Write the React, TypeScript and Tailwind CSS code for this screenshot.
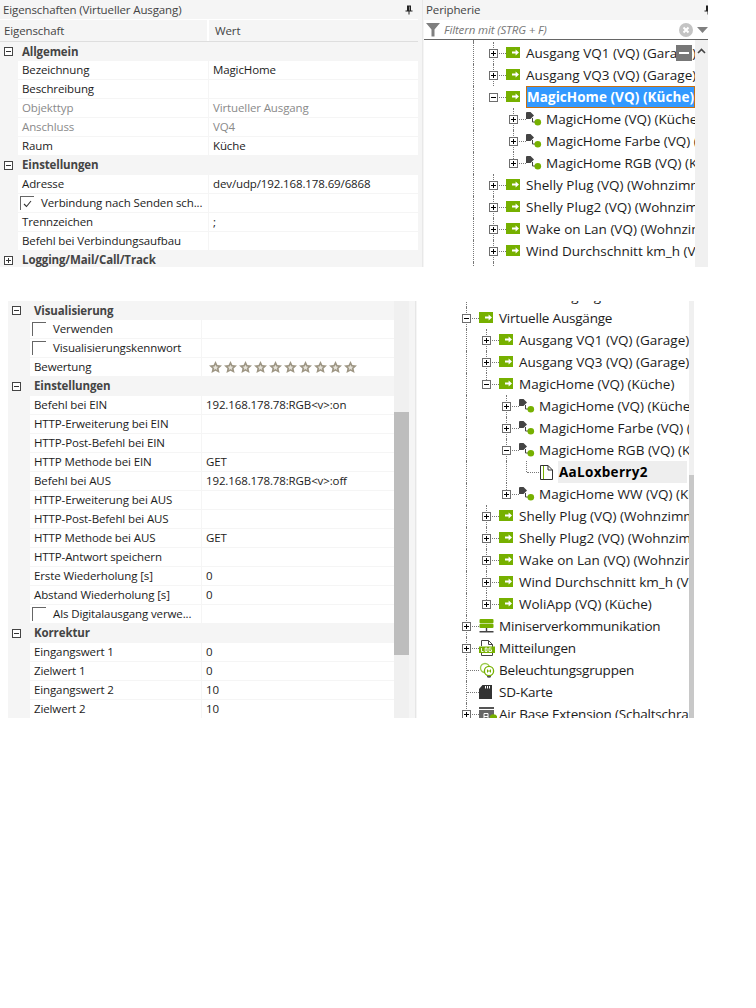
import React from "react";

const Font = "font-['Open_Sans','Noto_Sans',sans-serif]";

function Pin() {
  return (
    <svg width="8" height="10" viewBox="0 0 8 10" className="shrink-0">
      <path d="M2 0.5H6V5.5H7.5V6.5H4.5V9.5H3.5V6.5H0.5V5.5H2Z M4.5 1.5V5.5H5V1.5Z" fill="#222" fillRule="evenodd" />
    </svg>
  );
}

function Box({ open, dark }: { open: boolean; dark?: boolean }) {
  const c = dark ? "#333" : "#000";
  return (
    <svg width="9" height="9" viewBox="0 0 9 9" className="shrink-0">
      <rect x="0.5" y="0.5" width="8" height="8" fill="#fff" stroke={dark ? "#444" : "#6e6e6e"} />
      <path d={open ? "M2 4.5H7" : "M2 4.5H7M4.5 2V7"} stroke={c} />
    </svg>
  );
}

function Check({ on }: { on?: boolean }) {
  return (
    <div className="w-[14px] h-[14px] border-l border-t border-[#666] flex items-center justify-center shrink-0">
      {on && (
        <svg width="9" height="8" viewBox="0 0 9 8">
          <path d="M1 4L3.5 6.5L8 1" stroke="#333" fill="none" strokeWidth="1.1" />
        </svg>
      )}
    </div>
  );
}

function Star() {
  return (
    <svg width="13" height="12" viewBox="0 0 13 12" className="shrink-0">
      <path
        d="M6.5 0L8.4 4L13 4.6L9.6 7.6L10.6 12L6.5 9.8L2.4 12L3.4 7.6L0 4.6L4.6 4Z"
        fill="#9e9684"
      />
      <path d="M6.5 3.8L7.3 5.6L9.2 5.8L7.8 7.2L8.2 9L6.5 8.1L4.8 9L5.2 7.2L3.8 5.8L5.7 5.6Z" fill="#e6e3da" />
    </svg>
  );
}

type PropDef = {
  label?: string;
  value?: string;
  disabled?: boolean;
  check?: "on" | "off";
  stars?: boolean;
  group?: "open" | "closed";
};

function PropRows({ rows, left, col1, col2 }: { rows: PropDef[]; left: number; col1: string; col2: string }) {
  return (
    <>
      {rows.map((r, i) => {
        if (r.group) {
          return (
            <div key={i} className={`flex items-center shrink-0 ${i === 0 ? "h-[19px]" : "h-[20px]"}`}>
              <div className="flex items-center shrink-0" style={{ width: left }}>
                <span className="ml-[4px]">
                  <Box open={r.group === "open"} dark />
                </span>
              </div>
              <span className="pl-[4px] font-bold text-[#444]">{r.label}</span>
            </div>
          );
        }
        const next = rows[i + 1];
        const lastInGroup = !next || next.group;
        return (
          <div key={i} className={`flex shrink-0 gap-px ${lastInGroup ? "h-[18px]" : "h-[18px] mb-px"}`} style={{ paddingLeft: left }}>
            <div className={`${col1} bg-white flex items-center shrink-0 ${r.disabled ? "text-[#8a8a8a]" : "text-[#1c1c1c]"}`}>
              {r.check ? (
                <div className="flex items-center pl-[2px]">
                  <Check on={r.check === "on"} />
                  <span className="pl-[7px] whitespace-nowrap">{r.label}</span>
                </div>
              ) : (
                <span className="pl-[4px] whitespace-nowrap">{r.label}</span>
              )}
            </div>
            <div className={`${col2} bg-white flex items-center pl-[4px] ${r.disabled ? "text-[#8a8a8a]" : "text-[#1c1c1c]"}`}>
              {r.stars ? (
                <div className="flex gap-[2px] ml-[3px]">
                  {Array.from({ length: 10 }).map((_, k) => (
                    <Star key={k} />
                  ))}
                </div>
              ) : (
                <span className="whitespace-nowrap">{r.value}</span>
              )}
            </div>
          </div>
        );
      })}
    </>
  );
}

/* ---------- tree icons ---------- */
function GreenOut() {
  return (
    <svg width="14" height="11" viewBox="0 0 14 11" className="mb-[1px]">
      <rect width="14" height="11" fill="#76b000" />
      <path d="M6 4.4H9.6V2.6L13 5.5L9.6 8.4V6.6H6Z" fill="#fff" />
    </svg>
  );
}
function SubOut() {
  return (
    <svg width="16" height="14" viewBox="0 0 16 14">
      <path d="M0.5 0H4.5L8 3.5L4.5 7H0V0.5Z" fill="#444" />
      <path d="M6.5 6V10H9" stroke="#444" fill="none" />
      <circle cx="11.8" cy="10.3" r="3.3" fill="#76b000" />
    </svg>
  );
}
function DocIcon() {
  return (
    <svg width="13" height="15" viewBox="0 0 13 15" className="ml-[1px]">
      <path d="M0.5 0.5H8L12.5 5V14.5H0.5Z M8 0.5V5H12.5" fill="#fff" stroke="#333" />
      <path d="M3.5 1V14" stroke="#76b000" />
    </svg>
  );
}
function ServerIcon() {
  return (
    <svg width="15" height="14" viewBox="0 0 15 14">
      <rect x="0.5" y="0" width="14" height="4.2" rx="1" fill="#76b000" />
      <rect x="0.5" y="4.8" width="14" height="4.2" rx="1" fill="#76b000" />
      <path d="M7.5 9V12.5M0.5 12.8H14.5" stroke="#444" strokeWidth="1.4" />
    </svg>
  );
}
function LogIcon() {
  return (
    <svg width="16" height="16" viewBox="0 0 16 16">
      <path d="M2.5 6V0.5H9.5L13.5 4.5V15.5H2.5V13" fill="#fff" stroke="#444" />
      <path d="M9.5 0.5V4.5H13.5" fill="none" stroke="#444" />
      <rect x="0" y="6.5" width="16" height="6.5" fill="#76b000" />
      <path d="M2.5 8V11.5H4.5M6.2 8H8V11.5H6.2ZM12.5 8H10V11.5H12.5V9.8H11.3" fill="none" stroke="#fff" strokeWidth="0.9" />
    </svg>
  );
}
function BulbIcon() {
  return (
    <svg width="16" height="16" viewBox="0 0 16 16">
      <circle cx="6" cy="6" r="4.5" fill="none" stroke="#9ccb4c" strokeWidth="1.3" />
      <circle cx="10" cy="9" r="4.6" fill="#fff" stroke="#76b000" strokeWidth="1.3" />
      <path d="M8.5 7.5V10.5M11.5 7.5V10.5M8.5 9H11.5" stroke="#76b000" />
      <path d="M8 14.5H12M8.5 15.8H11.5" stroke="#555" />
    </svg>
  );
}
function SdIcon() {
  return (
    <svg width="13" height="14" viewBox="0 0 13 14">
      <path d="M3.5 0H13V14H0V4Z" fill="#333" />
      <path d="M6.5 1V3.5M8.5 1V3.5M10.5 1V3.5" stroke="#fff" />
    </svg>
  );
}
function AirIcon() {
  return (
    <svg width="18" height="15" viewBox="0 0 18 15">
      <rect x="0" y="0" width="15" height="2" fill="#555" />
      <rect x="0" y="3" width="15" height="12" fill="#666" />
      <path d="M5 12V6.5H9V12M5 9.5H9" stroke="#fff" fill="none" />
      <circle cx="14.5" cy="11" r="3.8" fill="#76b000" />
    </svg>
  );
}

const icons: Record<string, React.ReactNode> = {
  out: <GreenOut />,
  sub: <SubOut />,
  doc: <DocIcon />,
  server: <ServerIcon />,
  log: <LogIcon />,
  bulb: <BulbIcon />,
  sd: <SdIcon />,
  air: <AirIcon />,
};

type Node = {
  label: string;
  icon: string;
  guides: boolean[];
  exp?: "plus" | "minus";
  v?: "full" | "top";
  selected?: boolean;
  current?: boolean;
};

const dotV = "absolute left-[9px] w-0 border-l border-dotted border-[#777]";

function TreeRow({ n }: { n: Node }) {
  const wide = n.label.includes("(VQ)");
  return (
    <div className="flex items-center h-[22px] shrink-0 whitespace-nowrap">
      {n.guides.map((g, i) => (
        <div key={i} className="relative w-[20px] h-[22px] shrink-0">
          {g && <div className={`${dotV} top-0 bottom-0`} />}
        </div>
      ))}
      <div className="relative w-[20px] h-[22px] shrink-0 flex items-center">
        {n.v && <div className={`${dotV} top-0 ${n.v === "full" ? "bottom-0" : "h-[11px]"}`} />}
        <div className="absolute left-[10px] right-[-2px] top-[11px] h-0 border-t border-dotted border-[#777]" />
        {n.exp && (
          <span className="relative ml-[5px] flex">
            <Box open={n.exp === "minus"} />
          </span>
        )}
      </div>
      <div className="w-[22px] h-[22px] shrink-0 flex items-center pl-[2px]">
        {icons[n.icon]}
      </div>
      {n.selected ? (
        <span className="h-[22px] w-[169px] shrink-0 flex items-center bg-[#3399ff] border border-[#c9700f] text-white font-bold tracking-[0.05px] overflow-hidden">
          {n.label}
        </span>
      ) : n.current ? (
        <span className="h-[22px] w-[129px] ml-[-1px] pl-[1px] shrink-0 flex items-center bg-[#eeeeee] text-black font-bold tracking-[0.3px]">
          {n.label}
        </span>
      ) : (
        <span className={`text-[#1c1c1c] ${wide ? "tracking-[0px]" : "tracking-[-0.2px]"}`}>{n.label}</span>
      )}
    </div>
  );
}

const topTree: Node[] = [
  { label: "Ausgang VQ1 (VQ) (Garage)", icon: "out", guides: [true], exp: "plus", v: "full" },
  { label: "Ausgang VQ3 (VQ) (Garage)", icon: "out", guides: [true], exp: "plus", v: "full" },
  { label: "MagicHome (VQ) (Küche)", icon: "out", guides: [true], exp: "minus", selected: true },
  { label: "MagicHome (VQ) (Küche)", icon: "sub", guides: [true, false], exp: "plus", v: "full" },
  { label: "MagicHome Farbe (VQ) (Küche)", icon: "sub", guides: [true, false], exp: "plus", v: "full" },
  { label: "MagicHome RGB (VQ) (Küche)", icon: "sub", guides: [true, false], exp: "plus", v: "top" },
  { label: "Shelly Plug (VQ) (Wohnzimmer)", icon: "out", guides: [true], exp: "plus", v: "full" },
  { label: "Shelly Plug2 (VQ) (Wohnzimmer)", icon: "out", guides: [true], exp: "plus", v: "full" },
  { label: "Wake on Lan (VQ) (Wohnzimmer)", icon: "out", guides: [true], exp: "plus", v: "full" },
  { label: "Wind Durchschnitt km_h (VQ) (Küche)", icon: "out", guides: [true], exp: "plus", v: "full" },
  { label: "WoliApp (VQ) (Küche)", icon: "out", guides: [true], exp: "plus", v: "full" },
];

const bottomTree: Node[] = [
  { label: "Virtuelle Eingänge", icon: "out", guides: [], exp: "plus", v: "full" },
  { label: "Virtuelle Ausgänge", icon: "out", guides: [], exp: "minus", v: "full" },
  { label: "Ausgang VQ1 (VQ) (Garage)", icon: "out", guides: [true], exp: "plus", v: "full" },
  { label: "Ausgang VQ3 (VQ) (Garage)", icon: "out", guides: [true], exp: "plus", v: "full" },
  { label: "MagicHome (VQ) (Küche)", icon: "out", guides: [true], exp: "minus", v: "top" },
  { label: "MagicHome (VQ) (Küche)", icon: "sub", guides: [true, false], exp: "plus", v: "full" },
  { label: "MagicHome Farbe (VQ) (Küche)", icon: "sub", guides: [true, false], exp: "plus", v: "full" },
  { label: "MagicHome RGB (VQ) (Küche)", icon: "sub", guides: [true, false], exp: "minus", v: "full" },
  { label: "AaLoxberry2", icon: "doc", guides: [true, false, true], v: "top", current: true },
  { label: "MagicHome WW (VQ) (Küche)", icon: "sub", guides: [true, false], exp: "plus", v: "top" },
  { label: "Shelly Plug (VQ) (Wohnzimmer)", icon: "out", guides: [true], exp: "plus", v: "full" },
  { label: "Shelly Plug2 (VQ) (Wohnzimmer)", icon: "out", guides: [true], exp: "plus", v: "full" },
  { label: "Wake on Lan (VQ) (Wohnzimmer)", icon: "out", guides: [true], exp: "plus", v: "full" },
  { label: "Wind Durchschnitt km_h (VQ) (Küche)", icon: "out", guides: [true], exp: "plus", v: "full" },
  { label: "WoliApp (VQ) (Küche)", icon: "out", guides: [true], exp: "plus", v: "top" },
  { label: "Miniserverkommunikation", icon: "server", guides: [], exp: "plus", v: "full" },
  { label: "Mitteilungen", icon: "log", guides: [], exp: "plus", v: "full" },
  { label: "Beleuchtungsgruppen", icon: "bulb", guides: [], v: "full" },
  { label: "SD-Karte", icon: "sd", guides: [], v: "full" },
  { label: "Air Base Extension (Schaltschrank)", icon: "air", guides: [], exp: "plus", v: "full" },
];

const topProps: PropDef[] = [
  { group: "open", label: "Allgemein" },
  { label: "Bezeichnung", value: "MagicHome" },
  { label: "Beschreibung" },
  { label: "Objekttyp", value: "Virtueller Ausgang", disabled: true },
  { label: "Anschluss", value: "VQ4", disabled: true },
  { label: "Raum", value: "Küche" },
  { group: "open", label: "Einstellungen" },
  { label: "Adresse", value: "dev/udp/192.168.178.69/6868" },
  { label: "Verbindung nach Senden sch...", check: "on" },
  { label: "Trennzeichen", value: ";" },
  { label: "Befehl bei Verbindungsaufbau" },
  { group: "closed", label: "Logging/Mail/Call/Track" },
];

const bottomProps: PropDef[] = [
  { group: "open", label: "Visualisierung" },
  { label: "Verwenden", check: "off" },
  { label: "Visualisierungskennwort", check: "off" },
  { label: "Bewertung", stars: true },
  { group: "open", label: "Einstellungen" },
  { label: "Befehl bei EIN", value: "192.168.178.78:RGB<v>:on" },
  { label: "HTTP-Erweiterung bei EIN" },
  { label: "HTTP-Post-Befehl bei EIN" },
  { label: "HTTP Methode bei EIN", value: "GET" },
  { label: "Befehl bei AUS", value: "192.168.178.78:RGB<v>:off" },
  { label: "HTTP-Erweiterung bei AUS" },
  { label: "HTTP-Post-Befehl bei AUS" },
  { label: "HTTP Methode bei AUS", value: "GET" },
  { label: "HTTP-Antwort speichern" },
  { label: "Erste Wiederholung [s]", value: "0" },
  { label: "Abstand Wiederholung [s]", value: "0" },
  { label: "Als Digitalausgang verwe...", check: "off" },
  { group: "open", label: "Korrektur" },
  { label: "Eingangswert 1", value: "0" },
  { label: "Zielwert 1", value: "0" },
  { label: "Eingangswert 2", value: "10" },
  { label: "Zielwert 2", value: "10" },
];

export default function App() {
  return (
    <div className={`${Font} w-[756px] h-[1008px] bg-white text-[11.5px] tracking-[-0.12px] overflow-hidden`}>
      {/* top section */}
      <div className="flex h-[267px]">
        <div className="w-[424px] shrink-0 bg-[#f5f5f5] flex overflow-hidden">
          <div className="w-[418px] shrink-0 flex flex-col">
            <div className="h-[19px] shrink-0 flex items-center justify-between pl-[3px] pr-[5px] text-[#444]">
              <span>Eigenschaften (Virtueller Ausgang)</span>
              <Pin />
            </div>
            <div className="h-[23px] shrink-0 flex items-center border-t border-b border-t-white border-b-[#dedede] text-[#444]">
              <div className="w-[209px] h-full flex items-center pl-[4px] border-r-2 border-white">Eigenschaft</div>
              <div className="pl-[6px]">Wert</div>
            </div>
            <PropRows rows={topProps} left={18} col1="w-[190px]" col2="flex-1" />
          </div>
          <div className="flex-1 border-r border-[#e8e8e8] mr-[1px]" />
        </div>
        <div className="relative w-[284px] shrink-0 flex flex-col overflow-hidden">
          <div className="h-[20px] shrink-0 bg-[#f5f5f5] flex items-center justify-between pl-[2px] text-[#444]">
            <span>Peripherie</span>
            <span className="mr-[-4px]">
              <Pin />
            </span>
          </div>
          <div className="h-[20px] shrink-0 bg-white border-b border-[#666] flex items-center pl-[2px]">
            <svg width="14" height="14" viewBox="0 0 14 14" className="shrink-0">
              <path d="M0 0H14L8.5 6.5V13.5L5.5 13.5V6.5Z" fill="#808080" />
            </svg>
            <span className="ml-[4px] italic text-[#777] flex-1">Filtern mit (STRG + F)</span>
            <svg width="14" height="14" viewBox="0 0 14 14" className="shrink-0">
              <circle cx="7" cy="7" r="7" fill="#c4c4c4" />
              <path d="M4.5 4.5L9.5 9.5M9.5 4.5L4.5 9.5" stroke="#fff" strokeWidth="2" />
            </svg>
            <svg width="11" height="6" viewBox="0 0 11 6" className="ml-[4px] shrink-0">
              <path d="M0 0H11L5.5 6Z" fill="#808080" />
            </svg>
          </div>
          <div className="flex-1 flex min-h-0">
            <div className="w-[271px] shrink-0 overflow-hidden pl-[40px] pt-[2px] text-[13.5px] flex flex-col relative">
              <div className="absolute left-[49px] top-0 h-[2px] w-0 border-l border-dotted border-[#777]" />
              {topTree.map((n, i) => (
                <TreeRow key={i} n={n} />
              ))}
            </div>
            <div className="flex-1 bg-[#f0f0f0] flex justify-center pt-[8px]">
              <svg width="9" height="6" viewBox="0 0 9 6">
                <path d="M1 5L4.5 1.5L8 5" stroke="#444" strokeWidth="1.6" fill="none" />
              </svg>
            </div>
          </div>
          <div className="absolute left-[252px] top-[45px] w-[16px] h-[16px] bg-[#777] flex items-center justify-center">
            <div className="w-[10px] h-[2px] bg-white" />
          </div>
        </div>
      </div>

      {/* bottom section */}
      <div className="flex mt-[34px] h-[417px] pl-[8px]">
        <div className="w-[409px] shrink-0 bg-[#f5f5f5] flex overflow-hidden">
          <div className="w-[386px] shrink-0 flex flex-col">
            <PropRows rows={bottomProps} left={22} col1="w-[171px]" col2="flex-1" />
          </div>
          <div className="w-[15px] shrink-0 bg-[#f0f0f0] flex flex-col">
            <div className="h-[111px] shrink-0" />
            <div className="h-[243px] shrink-0 bg-[#bdbdbd]" />
          </div>
          <div className="flex-1 border-r border-[#e6e6e6] mr-[1px]" />
        </div>
        <div className="ml-[40px] w-[232px] shrink-0 overflow-hidden text-[13.5px]">
          <div className="mt-[-16px] flex flex-col">
            {bottomTree.map((n, i) => (
              <TreeRow key={i} n={n} />
            ))}
          </div>
        </div>
        <div className="w-[5px] shrink-0 flex flex-col bg-[#f0f0f0]">
          <div className="h-[174px] shrink-0" />
          <div className="flex-1 bg-[#c8c8c8]" />
        </div>
      </div>
    </div>
  );
}
